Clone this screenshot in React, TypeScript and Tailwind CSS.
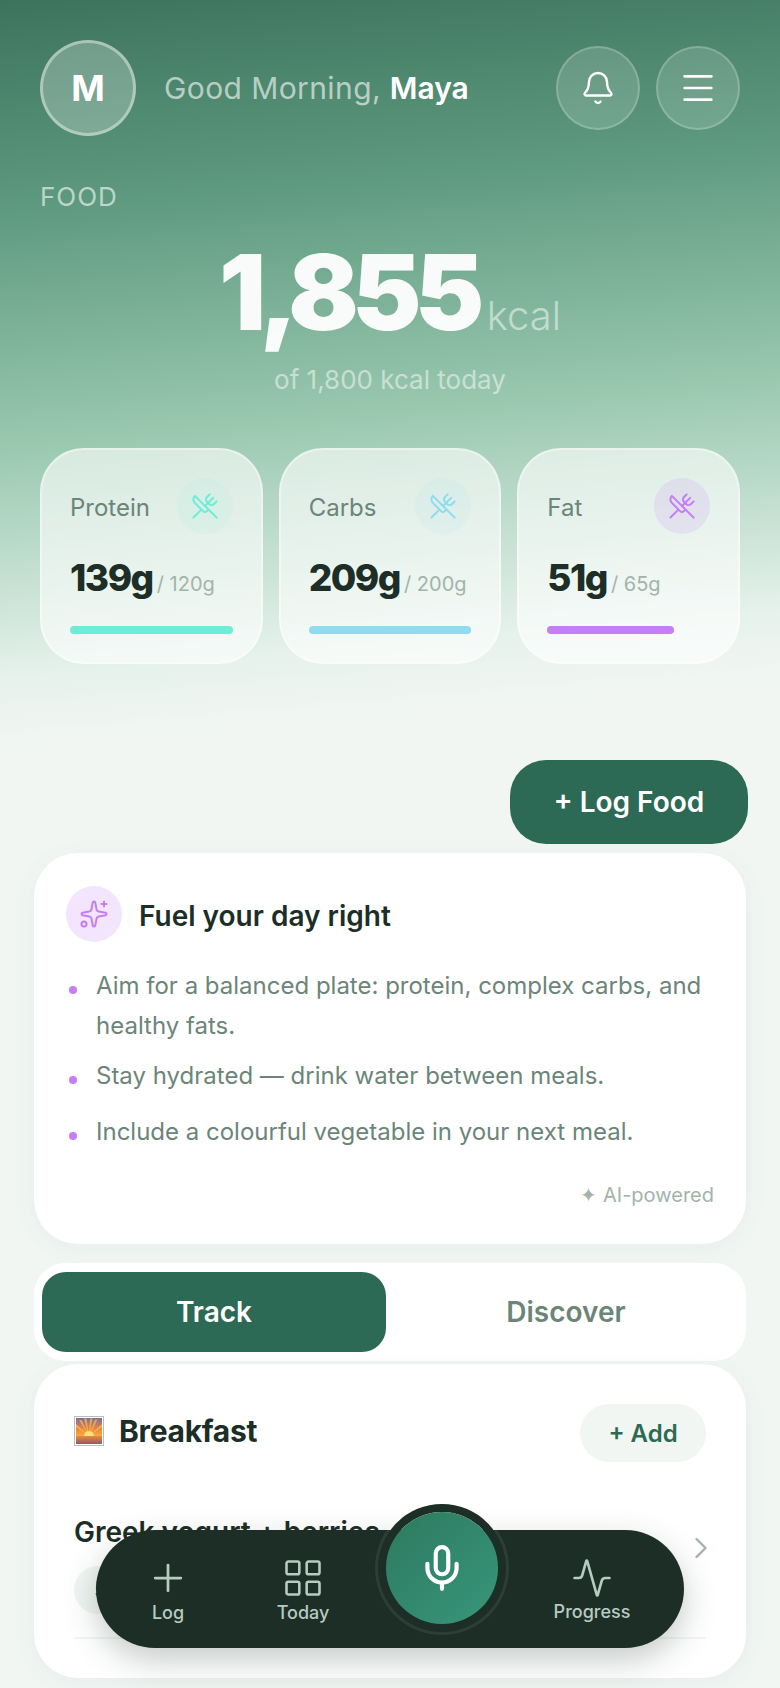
import { Activity, Bell, ChevronRight, LayoutGrid, Menu, Mic, Plus, Sparkles, UtensilsCrossed } from "lucide-react";

const macros = [
	{
		name: "Protein",
		value: "139g",
		goal: "/ 120g",
		circle: "bg-[#6eecd8]/[0.08]",
		icon: "text-[#6eecd8]",
		bar: "bg-[#6eecd8] w-full",
	},
	{
		name: "Carbs",
		value: "209g",
		goal: "/ 200g",
		circle: "bg-[#8fdcee]/[0.08]",
		icon: "text-[#8fdcee]",
		bar: "bg-[#8fdcee] w-full",
	},
	{
		name: "Fat",
		value: "51g",
		goal: "/ 65g",
		circle: "bg-[#c57ef5]/15",
		icon: "text-[#c57ef5]",
		bar: "bg-[#c57ef5] w-[78%]",
	},
];

const tips = [
	"Aim for a balanced plate: protein, complex carbs, and healthy fats.",
	"Stay hydrated — drink water between meals.",
	"Include a colourful vegetable in your next meal.",
];

function SunriseEmoji() {
	return (
		<svg width="30" height="30" viewBox="0 0 30 30" className="shrink-0">
			<defs>
				<linearGradient id="sky" x1="0" y1="0" x2="0" y2="1">
					<stop offset="0" stopColor="#7d6a9c" />
					<stop offset="0.45" stopColor="#f08a3c" />
					<stop offset="0.72" stopColor="#fbb03b" />
				</linearGradient>
				<linearGradient id="sea" x1="0" y1="0" x2="0" y2="1">
					<stop offset="0" stopColor="#e98a3c" />
					<stop offset="1" stopColor="#8c5a6a" />
				</linearGradient>
			</defs>
			<rect x="0.5" y="0.5" width="29" height="29" fill="#fff" stroke="#b8bfbc" />
			<rect x="2" y="2" width="26" height="26" fill="url(#sky)" />
			<path
				d="M15 20 5 4h2.5zM15 20 10 2.5h2.5zM15 20l1-17.5h2.5zM15 20l6-16.5h2.5zM15 20 2 8v3zM15 20l13-12v3z"
				fill="#fdc04d"
				opacity="0.7"
			/>
			<circle cx="15" cy="20" r="5" fill="#ffe27a" />
			<rect x="2" y="20" width="26" height="8" fill="url(#sea)" />
		</svg>
	);
}

function Header() {
	return (
		<header className="flex items-center">
			<div className="flex size-24 shrink-0 items-center justify-center rounded-full border-[3px] border-white/40 bg-white/25 text-[36px] font-bold text-white">
				M
			</div>
			<p className="ml-7 text-[30px] text-white/60">
				<span className="tracking-[0.4px]">Good Morning, </span>
				<span className="font-semibold text-white">Maya</span>
			</p>
			<div className="ml-auto flex gap-4">
				<button type="button" className="flex size-[84px] items-center justify-center rounded-full border-2 border-white/20 bg-white/15 text-white">
					<Bell size={36} strokeWidth={1.6} />
				</button>
				<button type="button" className="flex size-[84px] items-center justify-center rounded-full border-2 border-white/20 bg-white/15 text-white">
					<Menu size={40} strokeWidth={1.6} />
				</button>
			</div>
		</header>
	);
}

function Calories() {
	return (
		<section>
			<p className="mt-[43px] text-[26px] leading-[36px] tracking-[1px] text-white/60">FOOD</p>
			<div className="mt-[19px] flex items-baseline justify-center">
				<span className="text-[104px] leading-[116px] font-black tracking-[-6.5px] text-white/95">1,855</span>
				<span className="ml-[9px] text-[40px] font-light text-white/50">kcal</span>
			</div>
			<p className="mt-[12px] text-center text-[26px] leading-[36px] text-white/50">of 1,800 kcal today</p>
		</section>
	);
}

function MacroCards() {
	return (
		<div className="mt-[50px] grid grid-cols-3 gap-[16px]">
			{macros.map((m) => (
				<div key={m.name} className="h-[216px] rounded-[44px] border-2 border-white/40 bg-white/60 px-[28px] pt-[28px]">
					<div className="flex items-center justify-between">
						<span className="pt-[4px] text-[24px] text-[#6b8578]">{m.name}</span>
						<span className={`flex size-[56px] items-center justify-center rounded-full ${m.circle}`}>
							<UtensilsCrossed size={28} strokeWidth={1.7} className={m.icon} />
						</span>
					</div>
					<div className="mt-[20px] flex items-baseline gap-[4px] whitespace-nowrap">
						<span className="text-[37px] leading-[48px] font-extrabold tracking-[-1.5px] text-[#1c2e26]">{m.value}</span>
						<span className="text-[20px] text-[#a3b3ab]">{m.goal}</span>
					</div>
					<div className="mt-[24px] h-[8px] rounded-full">
						<div className={`h-full rounded-full ${m.bar}`} />
					</div>
				</div>
			))}
		</div>
	);
}

function TipsCard() {
	return (
		<section className="mx-[34px] mt-[9px] h-[391px] rounded-[44px] bg-white px-[32px] pt-[33px] shadow-[0_4px_24px_rgba(45,106,85,0.05)]">
			<div className="flex items-center gap-[17px]">
				<span className="flex size-[56px] items-center justify-center rounded-full bg-[#f3e5fd]">
					<Sparkles size={30} strokeWidth={1.6} className="text-[#c57ef5]" />
				</span>
				<h2 className="pt-[3px] text-[28px] font-semibold text-[#1c2e26]">Fuel your day right</h2>
			</div>
			<ul className="mt-[24px] flex flex-col gap-[10px]">
				{tips.map((tip) => (
					<li key={tip} className="relative pl-[30px] text-[24px] leading-[40px] text-[#6b8578] last:mt-[6px]">
						<span className="absolute top-[20px] left-[3px] size-[8px] rounded-full bg-[#c57ef5]" />
						{tip}
					</li>
				))}
			</ul>
			<p className="mt-[28px] text-right text-[20px] text-[#a3b3ab]">✦ AI-powered</p>
		</section>
	);
}

function Tabs() {
	return (
		<div className="mx-[34px] mt-[19px] flex h-[98px] items-center gap-[8px] rounded-[32px] bg-white px-[8px]">
			<button type="button" className="h-[80px] flex-1 rounded-[24px] bg-[#2d6a55] text-[28px] font-semibold text-white">
				Track
			</button>
			<button type="button" className="h-[80px] flex-1 text-[28px] font-semibold text-[#6b8578]">
				Discover
			</button>
		</div>
	);
}

function MealCard() {
	return (
		<section className="mx-[34px] mt-[3px] h-[314px] rounded-[44px] bg-white px-[40px] pt-[40px] shadow-[0_4px_24px_rgba(45,106,85,0.05)]">
			<div className="flex items-center justify-between">
				<div className="flex items-center gap-[15px] pb-[4px]">
					<SunriseEmoji />
					<h3 className="text-[30px] font-bold tracking-[-0.3px] text-[#1c2e26]">Breakfast</h3>
				</div>
				<button type="button" className="h-[58px] w-[126px] rounded-full bg-[#f1f6f3] pt-[2px] text-[24px] font-semibold text-[#2d6a55]">
					+ Add
				</button>
			</div>
			<div className="relative mt-[48px] border-b-2 border-[#f1f6f3] pb-[23px]">
				<p className="text-[28px] leading-[44px] font-semibold text-[#1c2e26]">Greek yogurt + berries</p>
				<span className="mt-[12px] inline-block rounded-full bg-[#f1f6f3] px-[20px] py-[6px] text-[24px] font-semibold text-[#2d6a55]">
					520 kcal
				</span>
				<ChevronRight size={36} strokeWidth={1.6} className="absolute top-[20px] -right-[13px] text-[#a3b3ab]" />
			</div>
		</section>
	);
}

function NavItem({ label, wide, children }: { label: string; wide?: boolean; children: React.ReactNode }) {
	return (
		<button type="button" className={`flex shrink-0 flex-col items-center pt-[2px] text-[#b7cbc1] ${wide ? "w-[126px]" : "w-[104px]"}`}>
			{children}
			<span className="mt-[1px] text-[18px] leading-[24px] font-medium">{label}</span>
		</button>
	);
}

function BottomNav() {
	return (
		<nav className="absolute bottom-[40px] left-[96px] flex h-[118px] w-[588px] items-center gap-[31px] rounded-full bg-[#1c2e26] pl-[20px] shadow-[0_12px_32px_rgba(28,46,38,0.25)]">
			<NavItem label="Log">
				<Plus size={44} strokeWidth={1.5} />
			</NavItem>
			<NavItem label="Today">
				<LayoutGrid size={44} strokeWidth={1.4} />
			</NavItem>
			<button
				type="button"
				className="-mt-[42px] flex size-[112px] shrink-0 items-center justify-center rounded-full bg-gradient-to-br from-[#2d7a60] to-[#38967a] shadow-[0_0_0_8px_#1c2e26,0_0_0_11px_rgba(255,255,255,0.08)]"
			>
				<Mic size={50} strokeWidth={2} className="text-white" />
			</button>
			<NavItem label="Progress" wide>
				<Activity size={42} strokeWidth={1.5} />
			</NavItem>
		</nav>
	);
}

export default function App() {
	return (
		<div className="relative h-[1688px] w-[780px] overflow-hidden bg-[#f1f6f3] font-[family-name:Inter,sans-serif]">
			<div className="h-[760px] bg-[linear-gradient(175deg,#3c735d_0%,#5f9b80_26%,#9ccab1_55%,#e6f2ec_82%,#f1f6f3_90%)] px-[40px] pt-[40px]">
				<Header />
				<Calories />
				<MacroCards />
			</div>
			<div className="flex justify-end pr-[32px]">
				<button type="button" className="h-[84px] w-[238px] rounded-[36px] bg-[#2d6a55] text-[28px] font-semibold text-white">
					+ Log Food
				</button>
			</div>
			<TipsCard />
			<Tabs />
			<MealCard />
			<BottomNav />
		</div>
	);
}
